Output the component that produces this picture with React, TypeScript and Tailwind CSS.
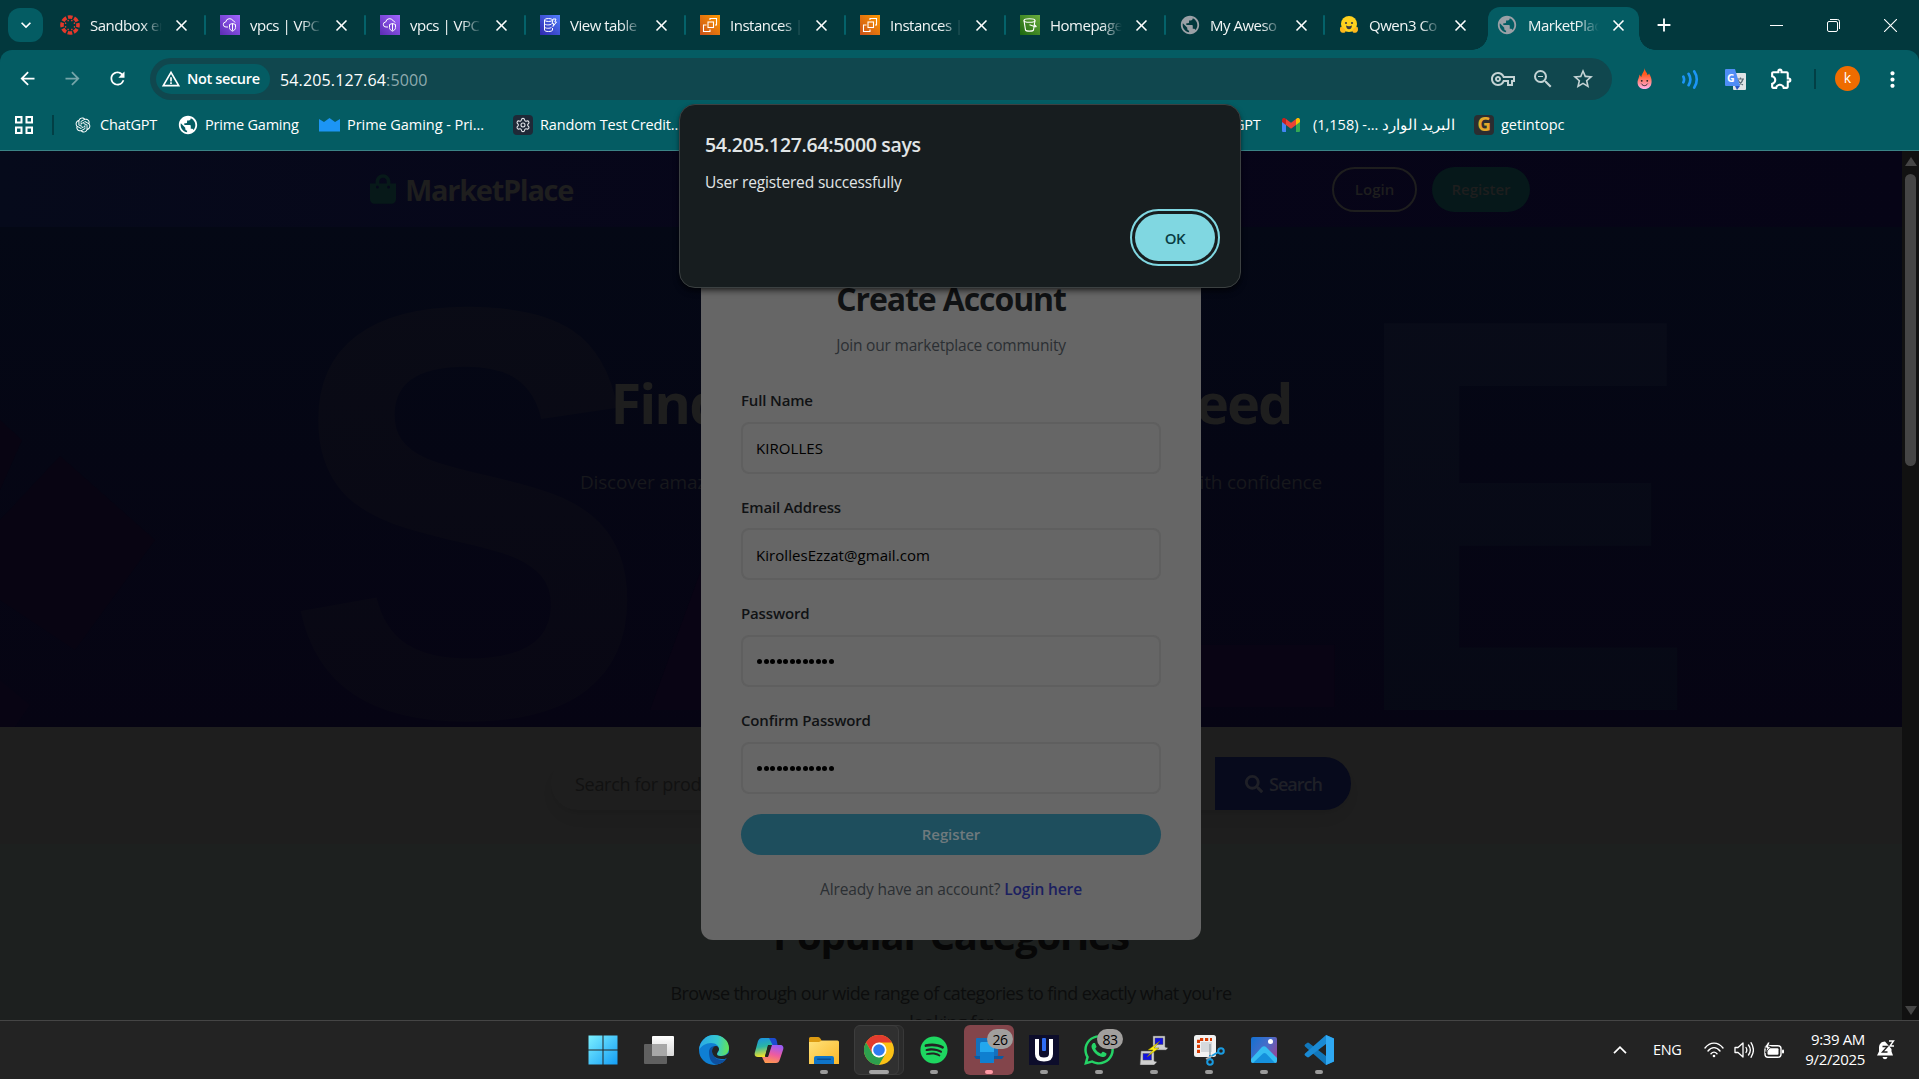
import React from "react";
import {
  MdArrowBack, MdArrowForward, MdRefresh, MdOutlineVpnKey, MdZoomOut, MdStarBorder,
  MdOutlineExtension, MdMoreVert, MdClose, MdAdd, MdKeyboardArrowDown, MdPublic, MdWarningAmber,
} from "react-icons/md";
import { FaShoppingBag, FaSearch, FaSpotify, FaWhatsapp } from "react-icons/fa";
import { RiOpenaiFill } from "react-icons/ri";
import { Settings } from "lucide-react";

/* ---------- favicons ---------- */

const Canvas = () => (
  <svg viewBox="0 0 20 20" className="size-5">
    <circle cx="10" cy="10" r="8" fill="none" stroke="#e4392b" strokeWidth="3.6" strokeDasharray="4.6 1.683" strokeDashoffset="2.3" />
    {[0, 45, 90, 135, 180, 225, 270, 315].map((a) => (
      <circle key={a} cx="10" cy="5.2" r="0.8" fill="#e4392b" transform={`rotate(${a + 22.5} 10 10)`} />
    ))}
  </svg>
);
const Vpc = () => (
  <svg viewBox="0 0 20 20" className="size-5">
    <defs><linearGradient id="vpc" x1="0" y1="1" x2="1" y2="0"><stop stopColor="#5a2bb3" /><stop offset="1" stopColor="#a166ff" /></linearGradient></defs>
    <rect width="20" height="20" fill="url(#vpc)" />
    <path d="M8 12H6a2.5 2.5 0 0 1-.3-5 4 4 0 0 1 7.600-1 2 2 0 0 1 1.700 1.500M9.500 9.500 12.500 8.500l3 1v3c0 2-1.500 3-3 3.600-1.500-.6-3-1.600-3-3.600zM12.500 8.500v7" fill="none" stroke="#fff" strokeWidth="1" />
  </svg>
);
const Dynamo = () => (
  <svg viewBox="0 0 20 20" className="size-5">
    <defs><linearGradient id="dyn" x1="0" y1="1" x2="1" y2="0"><stop stopColor="#2e27ad" /><stop offset="1" stopColor="#527fff" /></linearGradient></defs>
    <rect width="20" height="20" fill="url(#dyn)" />
    <g fill="none" stroke="#fff" strokeWidth="1"><ellipse cx="8.500" cy="5" rx="4" ry="1.500" /><path d="M4.500 5v10c0 2 8 2 8 0v-2M4.500 8.300c0 2 6 2 7 .6M4.500 11.700c0 2 6 2 7 .6M13 4h3l-1.200 3h1.700l-3.500 4.500.7-3h-1.500z" /></g>
  </svg>
);
const Ec2 = () => (
  <svg viewBox="0 0 20 20" className="size-5">
    <defs><linearGradient id="ec2" x1="0" y1="1" x2="1" y2="0"><stop stopColor="#c8511b" /><stop offset="1" stopColor="#ff9900" /></linearGradient></defs>
    <rect width="20" height="20" fill="url(#ec2)" />
    <g fill="none" stroke="#fff" strokeWidth="1.100"><rect x="8" y="7" width="5.500" height="5.500" /><path d="M10 5V3.500h6.500V10H15M6.500 10h-3v6.500H10v-2" /></g>
  </svg>
);
const Bucket = () => (
  <svg viewBox="0 0 20 20" className="size-5">
    <defs><linearGradient id="s3" x1="0" y1="1" x2="1" y2="0"><stop stopColor="#1b660f" /><stop offset="1" stopColor="#6cae3e" /></linearGradient></defs>
    <rect width="20" height="20" fill="url(#s3)" />
    <g fill="none" stroke="#fff" strokeWidth="1.100"><ellipse cx="9.500" cy="5.500" rx="5.500" ry="1.800" /><path d="M4 5.500 5.500 15c.5 1.500 7.500 1.500 8 0L15 5.500M9.500 9.800l5 1.800c2.500.8 2-.8-.5-2.200" /></g>
  </svg>
);
const Hug = () => (
  <svg viewBox="0 0 20 20" className="size-5">
    <circle cx="10" cy="9" r="8" fill="#ffd21e" />
    <path d="M1.500 12c2-.5 4 1 5 3.500.5 2-1 2.500-3 2.300C1.500 17.500.2 15 1.500 12zM18.500 12c-2-.5-4 1-5 3.500-.5 2 1 2.500 3 2.300 2-.3 3.300-2.800 2-5.800z" fill="#ffb81c" />
    <circle cx="7" cy="8" r="1.100" fill="#3a3b45" /><circle cx="13" cy="8" r="1.100" fill="#3a3b45" />
    <path d="M7 10.500c2 1 4 1 6 0-.3 3-1.500 3.700-3 3.700s-2.700-.7-3-3.700z" fill="#3a3b45" />
  </svg>
);
const Globe = ({ c, s }: { c: string; s: string }) => <MdPublic className={s} style={{ color: c }} />;

const tabs: { icon: React.ReactNode; title: string }[] = [
  { icon: <Canvas />, title: "Sandbox en" },
  { icon: <Vpc />, title: "vpcs | VPC" },
  { icon: <Vpc />, title: "vpcs | VPC" },
  { icon: <Dynamo />, title: "View table" },
  { icon: <Ec2 />, title: "Instances |" },
  { icon: <Ec2 />, title: "Instances |" },
  { icon: <Bucket />, title: "Homepage" },
  { icon: <Globe c="#9aa0a6" s="-m-px size-[22px]" />, title: "My Aweso" },
  { icon: <Hug />, title: "Qwen3 Co" },
];

function TabStrip() {
  return (
    <div className="flex h-[50px] shrink-0 bg-[#02383d] text-[15px] tracking-[-0.5px] text-[#f1f5f5]">
      <div className="mt-2 ml-2 flex h-[34px] w-[35px] items-center justify-center rounded-xl bg-[#045c63]">
        <MdKeyboardArrowDown className="size-5 text-white" />
      </div>
      <div className="ml-[3px] flex">
        {tabs.map((t, i) => (
          <div key={i} className={`flex h-[50px] items-center ${i > 6 ? "w-[159px]" : "w-40"}`}>
            <div className="ml-[14px] size-5 shrink-0">{t.icon}</div>
            <div className="ml-[10px] w-[72px] overflow-hidden whitespace-nowrap [mask-image:linear-gradient(to_right,black_72%,transparent)]">{t.title}</div>
            <MdClose className="ml-[10px] size-[19px] shrink-0 text-white" />
            {i < 8 && <div className="ml-auto h-5 w-[2px] rounded bg-[#04626a]" />}
          </div>
        ))}
      </div>
      <div className="relative mt-[7px] ml-[4px] flex h-[43px] w-[151px] items-center rounded-t-xl bg-[#045c63] pb-[7px] before:absolute before:bottom-0 before:-left-4 before:size-4 before:bg-[radial-gradient(circle_at_top_left,transparent_15.500px,#045c63_16px)] after:absolute after:-right-4 after:bottom-0 after:size-4 after:bg-[radial-gradient(circle_at_top_right,transparent_15.500px,#045c63_16px)]">
        <Globe c="#9aa0a6" s="ml-[8px] size-[22px]" />
        <div className="ml-[10px] w-[71px] overflow-hidden whitespace-nowrap [mask-image:linear-gradient(to_right,black_68%,transparent)]">MarketPlac</div>
        <MdClose className="ml-[10px] size-[19px] text-white" />
      </div>
      <MdAdd className="mt-[14px] ml-[14px] size-[22px] text-white" />
      <div className="mr-[22px] ml-auto flex h-[50px] items-center gap-[44px]">
        <div className="h-px w-[13px] bg-white" />
        <svg viewBox="0 0 13 13" className="size-[13px]" fill="none" stroke="#fff"><rect x=".5" y="2.500" width="10" height="10" rx="1.500" /><path d="M3 .5h7.500a2 2 0 0 1 2 2V10" /></svg>
        <svg viewBox="0 0 13 13" className="size-[13px]" stroke="#fff" strokeWidth="1.100"><path d="M0 0 13 13M13 0 0 13" /></svg>
      </div>
    </div>
  );
}

function Toolbar() {
  return (
    <div className="bg-[#02383d]">
      <div className="flex h-[58px] items-center rounded-t-xl bg-[#045c63] text-white">
        <MdArrowBack className="ml-[17px] size-[21px] -translate-y-px" />
        <MdArrowForward className="ml-6 size-[21px] -translate-y-px opacity-45" />
        <MdRefresh className="ml-6 size-[21px] -translate-y-px" />
        <div className="ml-[22px] flex h-[42px] w-[1462px] items-center rounded-full bg-[#10474e]">
          <div className="ml-[6px] flex h-[30px] w-[114px] items-center rounded-full bg-[#045c63] pl-[5px] text-[14.500px] font-semibold">
            <MdWarningAmber className="mr-[6px] size-5" />
            <span className="tracking-[-0.35px] whitespace-nowrap">Not secure</span>
          </div>
          <span className="ml-[10px] pt-px text-[16px] tracking-[0.15px]">54.205.127.64<span className="text-[#8fabae]">:5000</span></span>
          <MdOutlineVpnKey className="ml-auto size-6 text-[#c4d3d4]" />
          <MdZoomOut className="ml-[16px] size-6 text-[#c4d3d4]" />
          <MdStarBorder className="mr-[17px] ml-[16px] size-6 text-[#c4d3d4]" />
        </div>
        <svg viewBox="0 0 16 24" className="ml-[25px] h-[22px] w-[15px]"><defs><linearGradient id="fire" x1="0" y1="0" x2="0" y2="1"><stop offset=".3" stopColor="#ff5a1f" /><stop offset="1" stopColor="#ffb3ec" /></linearGradient></defs><path d="M8 0c.5 4 3 5 3.500 8l1.500-2c3 5 3 8 2.500 11-1 8-14 8-15 0C0 13 2 12 2.500 7l2 3C5 6 8 4 8 0z" fill="url(#fire)" /><circle cx="5" cy="14" r="1" fill="#222" /><circle cx="11" cy="14" r="1" fill="#222" /><path d="M4.500 17c2 3 5 3 7 0" fill="none" stroke="#222" /></svg>
        <svg viewBox="0 0 18 20" className="ml-[29px] h-[19px] w-[18px]" fill="none" stroke="#1c95f5" strokeWidth="2.800" strokeLinecap="round"><path d="M2 7c1 2 1 4 0 6M7.500 4c2.500 4 2.500 8 0 12M13.500 1.500c3.500 5 3.500 12 0 17" /></svg>
        <svg viewBox="0 0 21 21" className="ml-[26px] size-[21px]"><rect x="8" y="4" width="13" height="17" rx="1" fill="#dfe3e6" /><path d="M12 10h7M15.500 8.500V10M18 10c-1 4-3 5-5 6M13 11c1 3 3 4 5 5" stroke="#5f6f78" strokeWidth="1.200" fill="none" /><path d="M1 0h9l5 17H1a1 1 0 0 1-1-1V1a1 1 0 0 1 1-1z" fill="#4f8df5" /><path d="m10 17 5 0-3 4z" fill="#2a56c6" /><text x="2" y="12.500" fontSize="10.500" fontWeight="700" fill="#fff" fontFamily="Open Sans">G</text></svg>
        <MdOutlineExtension className="ml-[23px] size-[25px] -translate-y-px" />
        <div className="ml-[20px] h-5 w-[2px] bg-[#023f45]" />
        <div className="ml-[19px] flex size-[25px] -translate-y-px items-center justify-center rounded-full bg-[#ef6c00] text-sm">k</div>
        <MdMoreVert className="ml-[20px] size-[25px]" />
      </div>
      <div className="flex h-[42px] items-center bg-[#045c63] pb-[9px] text-[14.500px] tracking-[-0.2px] whitespace-nowrap text-white">
        <svg viewBox="0 0 18 18" className="ml-[15px] size-[18px]" fill="none" stroke="#fff" strokeWidth="2"><rect x="1" y="1" width="5.500" height="5.500" /><rect x="11.500" y="1" width="5.500" height="5.500" /><rect x="1" y="11.500" width="5.500" height="5.500" /><rect x="11.500" y="11.500" width="5.500" height="5.500" /></svg>
        <div className="ml-[19px] h-5 w-[2px] bg-[#023f45]" />
        <RiOpenaiFill className="ml-[20px] size-[18px]" /><span className="ml-[8px] w-[57px]">ChatGPT</span>
        <Globe c="#fff" s="ml-[20px] size-[22px]" /><span className="ml-[6px] w-[93px]">Prime Gaming</span>
        <svg viewBox="0 0 21 14" className="ml-[21px] h-[14px] w-[21px]" fill="#1c95f5"><path d="M0 1l5 3 5.500-4 5.500 4 5-3v12.500H0z" /></svg><span className="ml-[7px] w-[137px] tracking-[-0.050px]">Prime Gaming - Pri...</span>
        <div className="ml-[29px] flex size-5 items-center justify-center rounded bg-[#1f2937]"><Settings className="size-4 text-gray-200" strokeWidth={1.600} /></div><span className="ml-[7px] w-[141px] tracking-[-0.15px]">Random Test Credit...</span>
        <span className="ml-[553px] w-6">GPT</span>
        <svg viewBox="0 0 18 14" className="ml-[24px] h-[14px] w-[18px]"><path d="M0 2v10.500c0 1 .5 1.500 1.500 1.500H4V6z" fill="#4285f4" /><path d="M18 2v10.500c0 1-.5 1.500-1.500 1.500H14V6z" fill="#34a853" /><path d="M14 1v6l4-3V2c0-2-2-2.500-3-1.700z" fill="#fbbc04" /><path d="M4 1v6L0 4V2C0 0 2-.5 3 .3z" fill="#c5221f" /><path d="m4 1 5 3.800L14 1v6l-5 3.700L4 7z" fill="#ea4335" /></svg>
        <span className="ml-[13px] w-[140px] tracking-[-0.3px]" dir="ltr">(1,158) -... البريد الوارد</span>
        <div className="ml-[21px] flex size-5 items-center justify-center rounded-sm bg-[#2b2d30] text-[19px] leading-none font-bold text-[#e3a82b]">G</div><span className="ml-[7px] tracking-[0px]">getintopc</span>
      </div>
      <div className="h-px bg-[#3b8386]" />
    </div>
  );
}

function Hero() {
  return (
    <div className="relative h-[500px] shrink-0 overflow-hidden bg-linear-to-b from-[#040815] to-[#060413]">
      <svg viewBox="0 227 1902 500" className="absolute inset-0 h-[500px] w-[1902px]" fontFamily="Liberation Sans" fontWeight="700">
        <path d="M60 456 155 540 75 650 0 600V520zM0 420l22 20-22 50z" fill="#080412" />
        <path d="M0 680l30 25-15 22H0z" fill="#080413" />
        <defs><linearGradient id="sale" x1="0" y1="0" x2="0" y2="1"><stop stopColor="#0a0c16" /><stop offset="1" stopColor="#080613" /></linearGradient><linearGradient id="saleE" x1="0" y1="0" x2="0" y2="1"><stop stopColor="#090c19" /><stop offset="1" stopColor="#060814" /></linearGradient></defs>
        <text transform="translate(285 716) scale(.93 1)" fontSize="586" fill="url(#sale)">S</text>
        <text x="636" y="710" fontSize="560" fill="#090414">A</text>
        <text transform="translate(1010 707)" fontSize="560" fill="#090414">L</text>
        <text transform="translate(1349 710) scale(.93 1)" fontSize="562" fill="url(#saleE)">E</text>
      </svg>
      <div className="relative flex flex-col items-center">
        <div className="mt-[135px] flex h-20 w-[681px] items-center justify-between text-[56px] font-bold whitespace-nowrap text-[#1e1e1e]">
          <span className="tracking-[-2px]">Find Everything</span>
          <span className="tracking-[-2px]">You Need</span>
        </div>
        <div className="mt-[24px] flex h-8 w-[742px] items-center justify-between text-[19px] tracking-[-0.2px] whitespace-nowrap text-[#17181c]">
          <span>Discover amazing products</span>
          <span>shop with confidence</span>
        </div>
      </div>
    </div>
  );
}

function Field({ label, value, secret }: { label: string; value: string; secret?: boolean }) {
  return (
    <div className="mb-[20px] flex flex-col">
      <span className="mb-[10px] h-[24.670px] text-[15px] leading-[26px] font-semibold tracking-[-0.15px] text-[#101214]">{label}</span>
      <div className="flex h-[52px] items-center rounded-lg border-2 border-[#5f5f5f] px-[13px] pt-px text-[15px] tracking-[0.050px] text-black">
        {secret ? (
          <span className="flex gap-[1.500px] pl-px">{value.split("").map((_, i) => <span key={i} className="size-[5px] rounded-full bg-black" />)}</span>
        ) : value}
      </div>
    </div>
  );
}

function Modal() {
  return (
    <div className="absolute top-[46px] left-[701px] flex h-[743px] w-[500px] flex-col rounded-xl bg-[#666] px-10">
      <div className="mt-[80px] h-11 text-center text-[32px] leading-[44px] font-bold tracking-[-1.100px] text-[#101214]">Create Account</div>
      <div className="mt-[12px] h-6 text-center text-[15.500px] leading-6 tracking-[-0.2px] text-[#2b2f33]">Join our marketplace community</div>
      <div className="mt-[30px] flex flex-col">
        <Field label="Full Name" value="KIROLLES" />
        <Field label="Email Address" value="KirollesEzzat@gmail.com" />
        <Field label="Password" value="............" secret />
        <Field label="Confirm Password" value="............" secret />
      </div>
      <div className="flex h-[41px] items-center justify-center rounded-full bg-[#1e4e5d] pt-px text-[15px] font-semibold tracking-[-0.1px] text-[#6f7a7e]">Register</div>
      <div className="mt-[22px] h-6 text-center text-[15.500px] leading-6 tracking-[-0.13px] text-[#2b2f33]">Already have an account? <span className="font-semibold text-[#1b2060]">Login here</span></div>
    </div>
  );
}

function Page() {
  return (
    <div className="relative flex h-[869px] overflow-hidden">
      <div className="flex w-[1902px] flex-col overflow-hidden">
        <div className="flex h-[76px] shrink-0 items-center bg-linear-to-r from-[#060a1b] via-[#070519] to-[#060416]">
          <FaShoppingBag className="ml-[370px] h-[30px] w-[26px] text-[#071919]" />
          <span className="ml-[9px] pt-px text-[29px] font-bold tracking-[-1.300px] text-[#1e1e1e]">MarketPlace</span>
          <div className="ml-auto flex h-[45px] w-[85px] items-center justify-center rounded-full border-2 border-[#1e1e1e] pt-px text-[15px] font-semibold text-[#1e1e1e]">Login</div>
          <div className="mr-[372px] ml-[15px] flex h-[45px] w-[98px] items-center justify-center rounded-full bg-[#06181a] pt-px text-[15px] font-semibold text-[#1e1e1e]">Register</div>
        </div>
        <Hero />
        <div className="flex h-[117px] shrink-0 bg-[#1e1e1e] pt-[30px] shadow-sm">
          <div className="ml-[551px] flex h-[53px] w-[800px] items-center overflow-hidden rounded-full text-[18px] shadow-lg shadow-black/5">
            <span className="pt-[2px] pl-6 tracking-[-0.3px] text-[#111]">Search for products</span>
            <div className="ml-auto flex h-full w-[136px] items-center gap-[6px] bg-[#070a1c] pl-[30px] font-semibold tracking-[-1px] text-[#1f2027]"><FaSearch className="size-[18px] shrink-0" /><span className="pt-px">Search</span></div>
          </div>
        </div>
        <div className="flex grow flex-col items-center bg-[#1d201f]">
          <div className="mt-[61px] h-[60px] text-[40px] leading-[60px] font-bold tracking-[-1.250px] text-[#070707]">Popular Categories</div>
          <div className="mt-[14px] w-[600px] text-center text-[18px] leading-[29px] tracking-[-0.6px] text-[#0c0d0d]">Browse through our wide range of categories to find exactly what you're<br />looking for</div>
        </div>
      </div>
      <div className="flex w-[17px] flex-col items-center bg-[#111]">
        <svg viewBox="0 0 12 10" className="mt-[6px] h-[10px] w-3" fill="#454545"><path d="M6 0 12 9H0z" /></svg>
        <div className="mt-[7px] h-[292px] w-[11px] rounded-full bg-[#454545]" />
        <svg viewBox="0 0 12 10" className="mt-auto mb-[5px] h-[10px] w-3" fill="#454545"><path d="M6 10 12 1H0z" /></svg>
      </div>
      <Modal />
    </div>
  );
}

function AlertDialog() {
  return (
    <div className="absolute top-[104px] left-[679px] flex h-[184px] w-[562px] flex-col rounded-2xl border border-[#3c4142] bg-[#171d1f] px-[25px] text-[#e1e5e6] shadow-md shadow-black/50">
      <div className="mt-[25px] h-[30px] text-[19.500px] leading-[30px] font-semibold tracking-[-0.33px]">54.205.127.64:5000 says</div>
      <div className="mt-[10px] h-6 text-[15.500px] leading-6 tracking-[-0.15px]">User registered successfully</div>
      <div className="mt-[20px] flex h-[47px] w-[80px] items-center justify-center self-end rounded-full bg-[#80d7e1] pt-px text-[15px] font-semibold tracking-[-0.5px] text-[#093c43] outline-2 outline-offset-3 outline-[#80d7e1]">OK</div>
    </div>
  );
}

/* ---------- taskbar ---------- */

const Win = () => (
  <svg viewBox="0 0 30 30" className="size-[30px]"><defs><linearGradient id="win" x1="0" y1="0" x2="1" y2="1"><stop stopColor="#7cf0ff" /><stop offset="1" stopColor="#149df5" /></linearGradient></defs><path d="M.5.5h14v14H.5zM15.500.5h14v14h-14zM.5 15.500h14v14H.5zM15.500 15.500h14v14h-14z" fill="url(#win)" /></svg>
);
const TaskView = () => (
  <svg viewBox="0 0 32 30" className="h-[30px] w-8"><defs><linearGradient id="tv" x1="0" y1="0" x2="0" y2="1"><stop stopColor="#fff" /><stop offset="1" stopColor="#d8d8d8" /></linearGradient></defs><rect x="9" y="1" width="22" height="20" rx="1" fill="url(#tv)" /><rect x="1" y="9" width="23" height="20" rx="1" fill="#6b6b6b" fillOpacity=".85" /><rect x="9" y="9" width="15" height="12" fill="#a8a8a8" /></svg>
);
const Edge = () => (
  <svg viewBox="0 0 30 30" className="size-[30px]"><defs><linearGradient id="eg" x1="0" y1=".3" x2="1" y2=".4"><stop stopColor="#2aa8e8" /><stop offset=".6" stopColor="#35c8cf" /><stop offset="1" stopColor="#62e35a" /></linearGradient></defs>
    <circle cx="15" cy="15" r="15" fill="#0f7fd3" /><path d="M0 15C1 6 7 0 15 0c9 0 15 6 15 13 0 5-4 8-8 8-3 0-4-1-4-2s2-2 2-5-3-6-8-6C7 8 2 11 0 15z" fill="url(#eg)" /><path d="M10 17c0-4 3-6 6-6-2 1-3 3-3 5 0 5 5 9 10 9 2 0 4-1 5-2-3 5-8 7-12 6-4-1-6-6-6-12z" fill="#0d4f9e" /><path d="M13 16c0-3 2-5 4-5s3 2 3 3.500S18 17 18 19s2 2 5 2c2 0 5-1 7-3.500-.5 4-.8 5.500-2 5.500-1.500 1-3 1-5.500 1-5 0-9.500-3-9.500-8z" fill="#232323" /></svg>
);
const Copilot = () => (
  <svg viewBox="0 0 30 27" className="h-[27px] w-[30px]"><defs><linearGradient id="cp1" x1="0" y1="0" x2=".2" y2="1"><stop stopColor="#1a8fe8" /><stop offset=".5" stopColor="#2bb5a5" /><stop offset="1" stopColor="#f1e02a" /></linearGradient><linearGradient id="cp2" x1=".6" y1="0" x2=".3" y2="1"><stop stopColor="#9a5cf5" /><stop offset=".5" stopColor="#ee5ba0" /><stop offset="1" stopColor="#ff9a4d" /></linearGradient></defs>
    <path d="M8 1h12l2 7h-8l-3 12-2 0H4c-3 0-4-2-3-5L4 4c1-2 2-3 4-3z" fill="url(#cp1)" /><path d="M15 1h5c2 0 2.500 2 3 4l.6 3h-5z" fill="#1b4bd0" /><path d="M22 26H11l-3-6h6l4-12h8c3 0 4 2 3 5l-3 9c-1 3-2 4-4 4z" fill="url(#cp2)" /><path d="m14 9 3-1-3 11h-3z" fill="#232323" /></svg>
);
const Folder = () => (
  <svg viewBox="0 0 30 27" className="h-[27px] w-[30px]"><defs><linearGradient id="fo" x1="0" y1="0" x2="1" y2="1"><stop stopColor="#ffe27a" /><stop offset="1" stopColor="#fbb829" /></linearGradient></defs><path d="M0 1.500Q0 0 1.500 0H9q1 0 2 1l2 3h15v8H0z" fill="#dd9b12" /><path d="M0 5h10l3-1.500h15.500Q30 3.500 30 5v22H0z" fill="url(#fo)" /><path d="M5 27v-6q0-2 2-2h16q2 0 2 2v6z" fill="#0f74c8" /><rect x="8" y="21.500" width="14" height="1.500" rx=".7" fill="#084f94" /></svg>
);
const Chrome = () => (
  <svg viewBox="0 0 30 30" className="size-[30px]"><circle cx="15" cy="15" r="15" fill="#fbc116" /><path d="M2 7.500A15 15 0 0 1 28 7.500H15L8.500 18.800z" fill="#e33b2e" /><path d="M2 7.500 8.500 18.800 15 22.500l6.500-3.700L15 30A15 15 0 0 1 2 7.500z" fill="#2da04e" /><circle cx="15" cy="15" r="7.500" fill="#fff" /><circle cx="15" cy="15" r="5.800" fill="#2f7cf0" /></svg>
);
const Phone = () => (
  <svg viewBox="0 0 30 27" className="h-[27px] w-[30px]"><rect x="2" y="1" width="22" height="18" rx="1" fill="#1470bd" /><path d="M0 19h30l-2 3H2z" fill="#0d5aa3" /><rect x="6" y="5" width="14" height="21" rx="1.500" fill="#23a7ee" /><path d="M6 15h14v9.500q0 1.500-1.500 1.500h-11Q6 26 6 24.500z" fill="#0f7fd0" /></svg>
);
const UApp = () => (
  <svg viewBox="0 0 30 30" className="size-[30px]"><rect width="30" height="30" fill="#0d0d2b" /><path d="M8 4v15q0 5.500 7 5.500t7-5.500V4" fill="none" stroke="#fff" strokeWidth="4" /><rect x="13" y="3" width="4" height="13" rx="1" fill="#2f6df5" /></svg>
);
const Putty = () => (
  <svg viewBox="0 0 30 30" className="size-[30px]"><g stroke="#555" strokeWidth=".5"><path d="M14 1h12v11l3 1-2 2H12l2-3z" fill="#cfcfcf" /><rect x="16" y="3" width="8" height="6.500" fill="#1111e0" /><path d="M2 16h13v10l3 1-3 3H1z" fill="#cfcfcf" /><rect x="4" y="18.500" width="8.500" height="6.500" fill="#1111e0" /></g><path d="M21 6 9 15h5L8 22l12-9h-5z" fill="#ffee10" stroke="#7a7000" strokeWidth=".5" /></svg>
);
const Snip = () => (
  <svg viewBox="0 0 32 31" className="h-[31px] w-8"><rect x="1" y="0" width="22" height="22" rx="2.500" fill="#f1f1f1" /><rect x="8" y="7" width="11" height="10" fill="#d5d9dc" /><path d="M5.500 18V4.500H19" fill="none" stroke="#d83b01" strokeWidth="3" strokeDasharray="3.200 1.800" /><g fill="none" stroke="#1a9be0" strokeWidth="2"><circle cx="28" cy="16" r="2.800" /><circle cx="17" cy="27" r="2.800" /><path d="m25.500 17-7 4M17 24v-4" /></g><path d="M17 20V9M19 21l-6 3" stroke="#a8b0b6" strokeWidth="1.800" /></svg>
);
const Photos = () => (
  <svg viewBox="0 0 26 26" className="size-[26px]"><defs><linearGradient id="ph" x1="0" y1="0" x2="1" y2=".6"><stop stopColor="#1271d1" /><stop offset=".6" stopColor="#4a6cc8" /><stop offset="1" stopColor="#8c4a9c" /></linearGradient></defs><rect width="26" height="26" rx="2" fill="url(#ph)" /><path d="M0 22 10.500 10.500q2.500-2.500 5 0L26 21v3q0 2-2 2H2q-2 0-2-2z" fill="#35bdf2" /><path d="m2 26 10-9.500q1.500-1 3 0L24 26z" fill="#1590dc" /><circle cx="19.500" cy="4.500" r="2.500" fill="#fff" /></svg>
);
const Code = () => (
  <svg viewBox="0 0 30 30" className="size-[30px]"><path d="m22 0 8 3.500v23L22 30 1 11.500q-1-1 0-2L3 8q1-.8 2 0l17 13z" fill="#1177bb" /><path d="M22 0 1 18.500q-1 1 0 2L3 22q1 .8 2 0L22 9z" fill="#1a8ad4" /><path d="m22 0 8 3.500v23L22 30z" fill="#2fa8f2" /></svg>
);

const apps: { el: React.ReactNode; dot?: boolean; badge?: string; kind?: string }[] = [
  { el: <Win /> }, { el: <TaskView /> }, { el: <Edge /> }, { el: <Copilot /> },
  { el: <Folder />, dot: true },
  { el: <Chrome />, kind: "active" },
  { el: <FaSpotify className="size-7 text-[#1ed760]" />, dot: true },
  { el: <Phone />, kind: "alert", badge: "26" },
  { el: <UApp />, dot: true },
  { el: <FaWhatsapp className="size-[34px] text-[#25d366]" />, dot: true, badge: "83" },
  { el: <Putty />, dot: true }, { el: <Snip />, dot: true }, { el: <Photos />, dot: true }, { el: <Code />, dot: true },
];

function Taskbar() {
  return (
    <div className="flex h-[59px] shrink-0 border-t border-[#454545] bg-[#232323] text-white">
      <div className="ml-[576px] flex h-[58px]">
        {apps.map((a, i) => (
          <div key={i} className={`relative flex h-[58px] w-[55px] items-center justify-center ${i === 0 ? "-ml-px mr-px" : ""}`}>
            {a.kind === "active" && <><div className="absolute top-1 left-[9px] h-[50px] w-[44px] rounded-md border border-[#383838] bg-[#2b2b2b]" /><div className="absolute top-1 left-[3px] h-[50px] w-[45px] rounded-md border border-[#3d3d3d] bg-[#303030]" /></>}
            {a.kind === "alert" && <div className="absolute top-1 left-[3px] h-[50px] w-[50px] rounded-md bg-[#83454b]" />}
            <div className="relative">{a.el}</div>
            {a.badge && <div className="absolute top-2 left-[26px] flex h-5 w-[26px] items-center justify-center rounded-full bg-[#a19f9d] text-[14px] tracking-[-0.4px] text-black">{a.badge}</div>}
            {a.dot && <div className="absolute top-[49px] left-[24px] h-1 w-2 rounded-full bg-[#9a9a9a]" />}
            {a.kind === "active" && <div className="absolute top-[49px] left-[18px] h-1 w-5 rounded-full bg-[#a5a5a5]" />}
            {a.kind === "alert" && <div className="absolute top-[49px] left-[24px] h-1 w-2 rounded-full bg-[#ff99a4]" />}
          </div>
        ))}
      </div>
      <div className="ml-auto flex h-[58px] items-center text-[15px] tracking-[-0.3px]">
        <svg viewBox="0 0 14 8" className="w-[14px]" fill="none" stroke="#fff" strokeWidth="1.700"><path d="M1 7.200 7 1.200l6 6" /></svg>
        <span className="ml-[26px] w-[30px] text-[14.500px] tracking-[-0.4px]">ENG</span>
        <svg viewBox="0 0 20 16" className="ml-[21px] w-5" fill="none" stroke="#fff" strokeWidth="1.400" strokeLinecap="round"><path d="M1 6c5-6.500 13-6.500 18 0M4 9c3.500-4.500 8.500-4.500 12 0M7 11.800c2-2.300 4-2.300 6 0" /><circle cx="10" cy="14" r="1.300" fill="#fff" stroke="none" /></svg>
        <svg viewBox="0 0 20 18" className="ml-[10px] w-5" fill="none" stroke="#fff" strokeWidth="1.300" strokeLinejoin="round" strokeLinecap="round"><path d="M1 6.500h3L9 2v14l-5-4.500H1zM12 6.500c1 1.500 1 3.500 0 5M14.500 4c2.200 3 2.200 7 0 10M17 1.700c3 4.500 3 10 0 14.600" /></svg>
        <svg viewBox="0 0 20 17" className="ml-[10px] w-5"><rect x="1" y="3.700" width="16" height="11.600" rx="3" fill="none" stroke="#fff" strokeWidth="1.400" /><rect x="3.500" y="6.200" width="11" height="6.600" rx="1" fill="#fff" /><rect x="18" y="7.500" width="2" height="4" rx="1" fill="#fff" /><path d="M4 0 0 6h3L1.500 11 7 4.500H4.500L6 0z" fill="#fff" stroke="#232323" strokeWidth=".8" /></svg>
        <div className="ml-[11px] flex w-[70px] flex-col items-end pb-[3px] leading-5 tracking-[-0.35px] whitespace-nowrap"><span>9:39 AM</span><span>9/2/2025</span></div>
        <svg viewBox="0 0 18 20" className="mr-[24px] ml-[12px] w-[18px]" fill="#fff"><path d="M8 1.500c-4 0-6 3-6 6v4L0 15.500h16l-1.500-4V9M5.500 17h5q-.5 2.200-2.500 2.200T5.500 17z" /><path d="M12 1h4.500L13 6h4" fill="none" stroke="#fff" strokeWidth="1.400" /><path d="M5.500 6.500h5l-5 5.500h5" fill="none" stroke="#232323" strokeWidth="1.400" /></svg>
      </div>
    </div>
  );
}

export default function App() {
  return (
    <div className="relative flex h-[1079px] w-[1919px] flex-col overflow-hidden bg-[#02383d] font-['Open_Sans','Noto_Sans',sans-serif] [font-stretch:94%]">
      <TabStrip />
      <Toolbar />
      <Page />
      <Taskbar />
      <AlertDialog />
    </div>
  );
}
